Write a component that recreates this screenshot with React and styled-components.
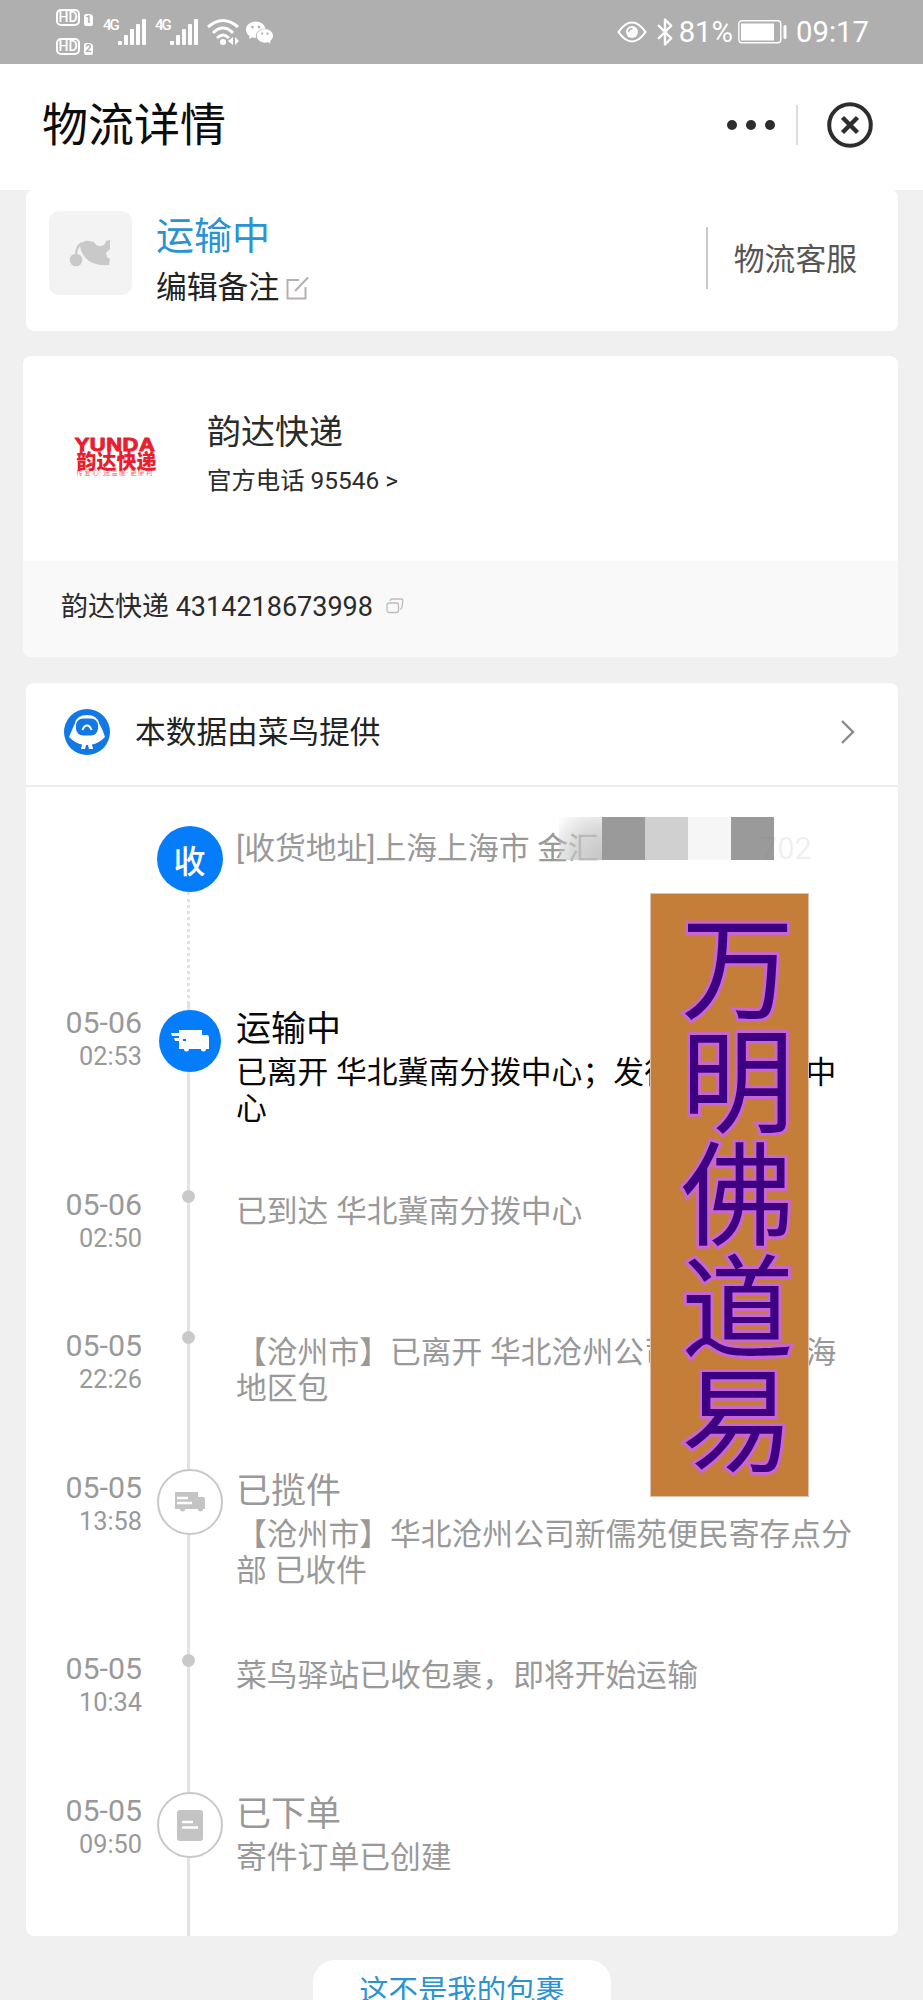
import React from 'react'
import styled, { createGlobalStyle, css } from 'styled-components'
import { Bluetooth } from 'lucide-react'
import { AiFillWechat } from 'react-icons/ai'

const COLORS = {
    page: '#f0f0f0',
    status: '#afafaf',
    blue: '#057dfb',
    link: '#2b93d1',
    text: '#2b2b2b',
    gray: '#999999',
    line: '#e2e2e2',
};

const GlobalStyle = createGlobalStyle`
    * {
        box-sizing: border-box;
    }

    body {
        margin: 0;
        background: ${COLORS.page};
        font-family: Roboto, "Noto Sans CJK SC", sans-serif;
        text-spacing-trim: space-all;
    }

    p {
        margin: 0;
    }

    svg {
        display: block;
        flex: none;
    }
`;

const Page = styled.div`
    width: 923px;
    height: 2000px;
    overflow: hidden;
    background: ${COLORS.page};
    white-space: nowrap;
`;

const StatusBar = styled.div`
    height: 64px;
    padding: 0 54px 0 56px;
    display: flex;
    justify-content: space-between;
    background: ${COLORS.status};
    color: #fff;
`;

const StatusGroup = styled.div`
    display: flex;
    align-items: center;
`;

const HdColumn = styled.div`
    display: flex;
    flex-direction: column;
    gap: 12px;
    margin-right: 10px;
`;

const HdRow = styled.div`
    display: flex;
    align-items: flex-end;
    gap: 4px;
`;

const HdBadge = styled.span`
    width: 24px;
    height: 17px;
    border: 2px solid #fff;
    border-radius: 5px;
    font-size: 14px;
    font-weight: 500;
    line-height: 13px;
    text-align: center;
`;

const SimBadge = styled.span`
    width: 9px;
    height: 12px;
    border-radius: 2px 4px 2px 2px;
    background: #fff;
    color: ${COLORS.status};
    font-size: 11px;
    font-weight: 700;
    line-height: 12px;
    text-align: center;
`;

const Signal = styled.div`
    display: flex;
    align-items: flex-start;
    width: 52px;
    height: 28px;

    span {
        width: 15px;
        font-size: 15px;
        font-weight: 500;
        line-height: 14px;
        letter-spacing: -2px;
    }
`;

const WechatIcon = styled(AiFillWechat)`
    margin-left: 5px;
`;

const BluetoothIcon = styled(Bluetooth)`
    margin-left: 3px;
`;

const StatusText = styled.span`
    font-size: ${props => props.$size}px;
    line-height: 34px;
    margin: 0 ${props => props.$right || 0}px 0 ${props => props.$left}px;
`;

const TitleBar = styled.header`
    height: 126px;
    padding: 0 50px 4px 42px;
    display: flex;
    align-items: center;
    justify-content: space-between;
    background: #fff;

    h1 {
        margin: 0;
        color: #0c0c0c;
        font-size: 46px;
        font-weight: 400;
        line-height: 60px;
    }
`;

const Capsule = styled.div`
    display: flex;
    align-items: center;
`;

const VerticalLine = styled.i`
    width: 2px;
    height: ${props => props.$height}px;
    margin: ${props => props.$margin || 0};
    background: ${props => props.$color};
`;

const Card = styled.section`
    margin: 0 25px 0 ${props => props.$left || 26}px;
    border-radius: 8px;
    background: #fff;
    overflow: hidden;
`;

const StatusCard = styled(Card)`
    height: 141px;
    display: flex;
    padding: 21px 41px 0 23px;
`;

const GoodsThumb = styled.div`
    width: 83px;
    height: 84px;
    border-radius: 10px;
    background: #f3f3f3;
    display: flex;
    align-items: center;
    justify-content: center;
`;

const StatusInfo = styled.div`
    flex: 1;
    padding-left: 24px;

    h2 {
        margin: 0;
        color: ${COLORS.link};
        font-size: 38px;
        font-weight: 400;
        line-height: 50px;
    }
`;

const EditRow = styled.div`
    display: flex;
    align-items: center;
    gap: 7px;
    color: #222;
    font-size: 30.8px;
    line-height: 54px;
`;

const Service = styled.div`
    height: 62px;
    margin-top: 16px;
    display: flex;
    align-items: center;
    gap: 26px;
    color: #555;
    font-size: 30.8px;

    span {
        padding-bottom: 4px;
    }
`;

const CompanyCard = styled(Card)`
    height: 301px;
    margin-top: 25px;
`;

const Company = styled.div`
    height: 205px;
    padding: 51px 0 0 49px;
    display: flex;
`;

const YundaLogo = styled.div`
    width: 86px;
    margin-top: 29px;
    color: #e8202e;
    text-align: center;

    b {
        display: block;
        font-family: "Liberation Sans", sans-serif;
        font-size: 19px;
        line-height: 18px;
        letter-spacing: 0.5px;
        transform: scaleX(1.15);
        -webkit-text-stroke: 1px #e8202e;
    }

    strong {
        display: block;
        padding-left: 3px;
        font-size: 20px;
        font-weight: 900;
        line-height: 16px;
    }

    small {
        display: block;
        margin-top: -1px;
        font-size: 6.5px;
        line-height: 9px;
        letter-spacing: 1.4px;
        opacity: 0.65;
    }
`;

const CompanyText = styled.div`
    margin-left: 49px;
    color: ${COLORS.text};

    h3 {
        margin: 0;
        font-size: 34px;
        font-weight: 400;
        line-height: 50px;
    }

    p {
        font-size: 24.4px;
        line-height: 48px;
    }
`;

const WaybillRow = styled.div`
    height: 96px;
    padding: 0 38px 6px;
    display: flex;
    align-items: center;
    gap: 13px;
    background: #f9f9f9;
    color: ${COLORS.text};
    font-size: 27px;

    span {
        padding-bottom: 3px;
    }
`;

const TrackCard = styled(Card)`
    height: 1253px;
    margin-top: 26px;
`;

const Provider = styled.div`
    height: 104px;
    padding: 0 43px 4px 38px;
    display: flex;
    align-items: center;
    border-bottom: 2px solid #ececec;

    span {
        flex: 1;
        margin-left: 25px;
        padding-bottom: 6px;
        color: #222;
        font-size: 30.7px;
    }
`;

const Step = styled.div`
    height: ${props => props.$height}px;
    display: grid;
    grid-template-columns: 116px 94px 1fr;
`;

const DateBox = styled.div`
    padding-top: 1px;
    color: ${COLORS.gray};
    text-align: right;

    p {
        font-size: 30.3px;
        line-height: 36px;
    }

    time {
        display: block;
        font-size: 25.3px;
        line-height: 32px;
    }
`;

const Axis = styled.div`
    display: flex;
    flex-direction: column;
    align-items: center;
    padding-top: ${props => props.$top || 0}px;
    padding-right: 1px;
`;

const Rail = styled.i`
    width: 0;
    border-left: 3px ${props => props.$dotted ? 'dotted' : 'solid'} ${COLORS.line};
    ${props => props.$height !== undefined ? css`height: ${props.$height}px;` : css`flex: 1;`}
`;

const Dot = styled.i`
    width: 13px;
    height: 13px;
    border-radius: 50%;
    background: #c9c9c9;
`;

const Node = styled.div`
    flex: none;
    width: ${props => props.$size}px;
    height: ${props => props.$size}px;
    margin-left: 2px;
    border-radius: 50%;
    display: flex;
    align-items: center;
    justify-content: center;
    color: #fff;
    font-size: 32px;
    font-weight: 500;
    ${props => props.$active ? css`
        background: ${COLORS.blue};
    ` : css`
        background: #fff;
        border: 2px solid #c8c8c8;
    `}
`;

const Detail = styled.div`
    margin-top: ${props => props.$top}px;
    color: ${props => props.$active ? '#080808' : COLORS.gray};

    h4 {
        margin: 0;
        font-size: 35px;
        font-weight: 400;
        line-height: 50px;
    }

    p {
        font-size: 30.8px;
        line-height: 36px;
    }
`;

const Address = styled.div`
    position: relative;
    padding-top: 44px;
    color: ${COLORS.gray};
    font-size: 30.8px;
    line-height: 36px;
`;

// the mosaic lies over the end of the address
const Mosaic = styled.div`
    position: absolute;
    left: 323px;
    top: 30px;
    height: 43px;
    display: flex;

    i {
        width: 43px;
    }
`;

const Fade = styled.i`
    background: radial-gradient(ellipse at 100% 100%, rgba(190, 190, 190, 0.9), rgba(200, 200, 200, 0.7) 50%, rgba(255, 255, 255, 0) 100%);
`;

const Block = styled.i`
    background: ${props => props.$color};
`;

const RoomNumber = styled.span`
    position: absolute;
    left: 524px;
    top: 44px;
    color: rgba(130, 130, 130, 0.13);
`;

const Watermark = styled.div`
    position: absolute;
    left: 650px;
    top: 893px;
    width: 159px;
    height: 604px;
    padding: 11px 0 0 16px;
    border: 1px solid #e0bfae;
    background: #c47e3a;
    color: #3e0083;
    font-family: "Noto Sans CJK SC", sans-serif;
    font-size: 113px;
    text-align: center;
    -webkit-text-stroke: 6px #c965d0;
    paint-order: stroke fill;

    span {
        display: block;
        height: 113px;
        line-height: 113px;
    }
`;

const NotMine = styled.button`
    display: block;
    width: 298px;
    height: 62px;
    margin: 24px 0 0 313px;
    padding: 0;
    border: none;
    border-radius: 22px;
    background: #fff;
    color: ${COLORS.link};
    font-family: inherit;
    font-size: 29.4px;
    line-height: 56px;
`;

const SignalIcon = () => (
    <Signal>
        <span>4G</span>
        <svg width="29" height="28" viewBox="0 0 29 28" fill="#fff">
            <rect x="0" y="23" width="4" height="4" rx="1" />
            <rect x="6" y="17" width="4" height="10" rx="1" />
            <rect x="12" y="11" width="4" height="16" rx="1" />
            <rect x="18" y="6" width="4" height="21" rx="1" />
            <rect x="24" y="1" width="4" height="26" rx="1" />
        </svg>
    </Signal>
)

const WifiIcon = () => (
    <svg width="32" height="28" viewBox="0 0 32 28" fill="none" stroke="#fff" strokeWidth="3">
        <path d="M1 9 Q16 -4 31 9" />
        <path d="M6 15 Q16 5 26 15" />
        <path d="M10 20 Q16 14 22 20" />
        <circle cx="16" cy="24" r="3" fill="#fff" stroke="none" />
        <path d="M26 19v8l-5-4zM28 19v8l4-4z" fill="#fff" stroke="none" />
    </svg>
)

const EyeIcon = () => (
    <svg width="30" height="22" viewBox="0 0 30 22" fill="none" stroke="#fff" strokeWidth="2.2">
        <path d="M1.5 11 Q8 1.5 15 1.5 T28.5 11 Q22 20.5 15 20.5 T1.5 11Z" />
        <circle cx="15" cy="11" r="6" fill="#fff" stroke="none" />
        <path d="M11.5 11a4 4 0 0 1 4-3.6" stroke={COLORS.status} strokeWidth="1.5" />
    </svg>
)

const BatteryIcon = () => (
    <svg width="50" height="24" viewBox="0 0 50 24" fill="none">
        <rect x="0.8" y="0.8" width="42" height="22" rx="3" stroke="#fff" strokeWidth="1.4" />
        <rect x="3" y="3.5" width="33" height="17" fill="#fff" />
        <rect x="45.5" y="5" width="3" height="14" rx="1.5" fill="#fff" />
    </svg>
)

const MoreIcon = () => (
    <svg width="50" height="12" viewBox="0 0 50 12" fill="#2d2d2d">
        <circle cx="6" cy="6" r="5" />
        <circle cx="25" cy="6" r="5" />
        <circle cx="44" cy="6" r="5" />
    </svg>
)

const CloseIcon = () => (
    <svg width="46" height="46" viewBox="0 0 46 46" fill="none" stroke="#2d2d2d" strokeWidth="4">
        <circle cx="23" cy="23" r="20.8" />
        <path d="M15.5 15.5l15 15M30.5 15.5l-15 15" strokeWidth="4.4" />
    </svg>
)

const BirdIcon = () => (
    <svg width="44" height="30" viewBox="0 0 44 30">
        <path d="M11 8 Q14 2 20 3 L25 4 Q27 8 31 8 Q36 8 37 3 L41 2 L41 11 L37 15 L38 19 L41 21 L40 27 Q27 28 20 23 Q12 17 11 8 Z" fill="#c9c9c9" />
        <path d="M13 5 Q7 8 7 18" fill="none" stroke="#c9c9c9" strokeWidth="2.4" />
        <circle cx="7" cy="22" r="6.3" fill="#c9c9c9" />
    </svg>
)

const EditIcon = () => (
    <svg width="24" height="24" viewBox="0 0 24 24" fill="none" stroke="#b5b0b0" strokeWidth="2">
        <path d="M13 4H1.5v18.5H19.5V11" />
        <path d="M9 15L22 1.5" />
    </svg>
)

const CopyIcon = () => (
    <svg width="18" height="16" viewBox="0 0 18 16" fill="none" stroke="#bdbdbd" strokeWidth="1.3">
        <rect x="1" y="5" width="11.5" height="9.5" rx="2" />
        <path d="M4 3Q4.5 1 6 1H15Q17 1 16.8 3L16 9Q15.7 11 14 11.5" />
    </svg>
)

const CainiaoIcon = () => (
    <svg width="46" height="46" viewBox="0 0 46 46">
        <circle cx="23" cy="23" r="23" fill="#1279e4" />
        <path d="M11 14 Q13 6 23 6 Q33 6 35 14 Q39 21 41 28 Q34 35 28 35.5 L29 40 L25 40 L24 36 L22 36 L21 40 L17 40 L18 35.5 Q12 35 5 28 Q8 21 11 14Z" fill="#fff" />
        <rect x="12" y="9.5" width="22" height="17" rx="7" fill="#1279e4" />
        <path d="M18.5 21 Q20 16.500 23 16.500 Q26 16.500 27.5 21" fill="none" stroke="#fff" strokeWidth="2" />
    </svg>
)

const ChevronIcon = () => (
    <svg width="14" height="24" viewBox="0 0 14 24" fill="none" stroke="#8a8a8a" strokeWidth="2.4">
        <path d="M1 1l11 11L1 23" />
    </svg>
)

const FastTruckIcon = () => (
    <svg width="40" height="24" viewBox="0 0 40 24" fill="#fff">
        <path d="M9 1h23v5h6l1 2v12h-3a2.5 2.5 0 0 1-5 0H19a2.5 2.5 0 0 1-5 0H9V12h7v-2H9z" />
        <path d="M1 4h9v3H2zM4 9h9v3H5z" />
    </svg>
)

const TruckIcon = () => (
    <svg width="32" height="22" viewBox="0 0 32 22">
        <path d="M1 1h23v5h6l1 2v10h-2a2.5 2.5 0 0 1-5 0H11a2.500 2.500 0 0 1-5 0H1z" fill="#c4c4c4" />
        <path d="M3 7h11M3 12h15" stroke="#fff" strokeWidth="2.5" />
    </svg>
)

const OrderIcon = () => (
    <svg width="26" height="31" viewBox="0 0 26 31">
        <rect width="26" height="31" rx="3" fill="#c4c4c4" />
        <path d="M5 12h11M5 17.5h16" stroke="#fff" strokeWidth="2.5" />
    </svg>
)

const steps = [
    { date: '05-06', time: '02:53', height: 182, icon: <FastTruckIcon />, active: true, title: '运输中', lines: ['已离开 华北冀南分拨中心；发往 上海分拨中', '心'] },
    { date: '05-06', time: '02:50', height: 141, lines: ['已到达 华北冀南分拨中心'] },
    { date: '05-05', time: '22:26', height: 142, lines: ['【沧州市】已离开 华北沧州公司；发往 上海', '地区包'] },
    { date: '05-05', time: '13:58', height: 181, icon: <TruckIcon />, title: '已揽件', lines: ['【沧州市】华北沧州公司新儒苑便民寄存点分', '部 已收件'] },
    { date: '05-05', time: '10:34', height: 142, lines: ['菜鸟驿站已收包裹，即将开始运输'] },
    { date: '05-05', time: '09:50', height: 144, icon: <OrderIcon />, title: '已下单', lines: ['寄件订单已创建'] },
];

const getDetailTop = (title, active) => {
    if (!title) return 8;
    return active ? 1 : -2;
}

const TrackStep = ({ step }) => {
    const { date, time, height, icon, active, title, lines } = step;

    return (
        <Step $height={height}>
            <DateBox>
                <p>{date}</p>
                <time>{time}</time>
            </DateBox>
            <Axis>
                <Rail $height={icon ? (active ? 6 : 0) : 4} $dotted={active} />
                {icon ? <Node $size={active ? 62 : 66} $active={active}>{icon}</Node> : <Dot />}
                <Rail />
            </Axis>
            <Detail $active={active} $top={getDetailTop(title, active)}>
                {title && <h4>{title}</h4>}
                {lines.map((line) => <p key={line}>{line}</p>)}
            </Detail>
        </Step>
    )
}

const App = () => {
    return (
        <Page>
            <GlobalStyle />
            <StatusBar>
                <StatusGroup>
                    <HdColumn>
                        <HdRow><HdBadge>HD</HdBadge><SimBadge>1</SimBadge></HdRow>
                        <HdRow><HdBadge>HD</HdBadge><SimBadge>2</SimBadge></HdRow>
                    </HdColumn>
                    <SignalIcon />
                    <SignalIcon />
                    <WifiIcon />
                    <WechatIcon size={31} />
                </StatusGroup>
                <StatusGroup>
                    <EyeIcon />
                    <BluetoothIcon width={30} height={30} strokeWidth={1.9} />
                    <StatusText $size={29.3} $left={-1} $right={5}>81%</StatusText>
                    <BatteryIcon />
                    <StatusText $size={29.3} $left={8}>09:17</StatusText>
                </StatusGroup>
            </StatusBar>

            <TitleBar>
                <h1>物流详情</h1>
                <Capsule>
                    <MoreIcon />
                    <VerticalLine $height={40} $color="#dcdcdc" $margin="0 29px 0 20px" />
                    <CloseIcon />
                </Capsule>
            </TitleBar>

            <StatusCard>
                <GoodsThumb><BirdIcon /></GoodsThumb>
                <StatusInfo>
                    <h2>运输中</h2>
                    <EditRow>编辑备注<EditIcon /></EditRow>
                </StatusInfo>
                <Service>
                    <VerticalLine $height={62} $color="#c9c9c9" />
                    <span>物流客服</span>
                </Service>
            </StatusCard>

            <CompanyCard $left={23}>
                <Company>
                    <YundaLogo>
                        <b>YUNDA</b>
                        <strong>韵达快递</strong>
                        <small>传爱心·送温暖·更便利</small>
                    </YundaLogo>
                    <CompanyText>
                        <h3>韵达快递</h3>
                        <p>官方电话 95546 &gt;</p>
                    </CompanyText>
                </Company>
                <WaybillRow><span>韵达快递 4314218673998</span><CopyIcon /></WaybillRow>
            </CompanyCard>

            <TrackCard>
                <Provider>
                    <CainiaoIcon />
                    <span>本数据由菜鸟提供</span>
                    <ChevronIcon />
                </Provider>
                <Step $height={217}>
                    <DateBox />
                    <Axis $top={39}>
                        <Node $size={66} $active>收</Node>
                        <Rail $dotted />
                    </Axis>
                    <Address>
                        [收货地址]上海上海市 金汇
                        <Mosaic>
                            <Fade />
                            <Block $color="#9a9a9a" />
                            <Block $color="#d0d0d0" />
                            <Block $color="#f6f6f6" />
                            <Block $color="#9a9a9a" />
                        </Mosaic>
                        <RoomNumber>702</RoomNumber>
                    </Address>
                </Step>
                {steps.map((step) => <TrackStep key={step.time} step={step} />)}
            </TrackCard>

            <NotMine>这不是我的包裹</NotMine>

            <Watermark>
                {['万', '明', '佛', '道', '易'].map((char) => <span key={char}>{char}</span>)}
            </Watermark>
        </Page>
    )
}

export default App;
